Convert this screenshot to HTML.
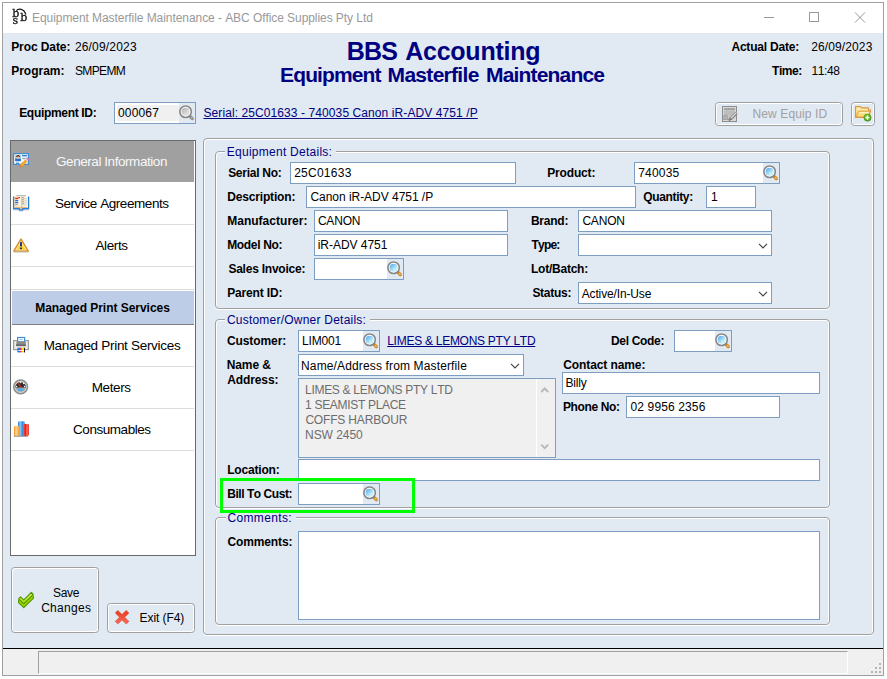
<!DOCTYPE html>
<html><head><meta charset="utf-8"><title>Equipment Masterfile Maintenance</title>
<style>
*{box-sizing:border-box;margin:0;padding:0}
html,body{width:887px;height:679px;overflow:hidden;background:#fff}
body{font-family:"Liberation Sans",sans-serif;font-size:12px;color:#000;position:relative;font-kerning:none}
.a{position:absolute;white-space:nowrap;line-height:14px}
.b{font-weight:bold}
.in{position:absolute;background:#fff;border:1px solid #7d9ec0}
.fs{position:absolute;border:1px solid #a0a0a0;border-radius:4px;box-shadow:inset 1px 1px 0 #fff,inset -1px 0 0 #fff,0 1px 0 #fff}
.lg{background:#e1e9f3}
.lnk{color:#000080;text-decoration:underline;text-underline-offset:1px}
.mi{position:absolute;left:11px;width:183px;height:42px;border-bottom:1px solid #dcdcdc}
.btn{position:absolute;border:1px solid #a0a0a0;border-radius:3.5px;box-shadow:inset 1px 1px 0 #fff,inset -1px -1px 0 #fff}
svg{position:absolute;overflow:visible}
.ic{position:absolute;overflow:visible;display:block}
</style></head><body>
<div class="a" style="left:2px;top:2px;width:882px;height:674px;border:1px solid #a0a0a0;background:#e1e9f3"></div>
<div class="a" style="left:3px;top:3px;width:880px;height:30px;background:#fff"></div>
<div class="a" style="left:32.02px;top:10px;line-height:16px;letter-spacing:-0.066px;color:#999;">Equipment Masterfile Maintenance - ABC Office Supplies Pty Ltd</div>
<div class="a b" style="left:11.20px;top:40px;letter-spacing:-0.085px;">Proc Date:</div>
<div class="a" style="left:74.90px;top:40px;letter-spacing:0.180px;">26/09/2023</div>
<div class="a b" style="left:11.20px;top:64px;letter-spacing:-0.012px;">Program:</div>
<div class="a" style="left:74.96px;top:64px;letter-spacing:-0.634px;">SMPEMM</div>
<div class="a b" style="left:346.63px;top:37.4px;font-size:25px;line-height:28px;letter-spacing:-0.717px;color:#000080;">BBS</div>
<div class="a b" style="left:405.18px;top:37.4px;font-size:25px;line-height:28px;letter-spacing:-0.233px;color:#000080;">Accounting</div>
<div class="a b" style="left:280.10px;top:62.95px;font-size:21px;line-height:24px;letter-spacing:-0.900px;color:#000080;">Equipment</div>
<div class="a b" style="left:387.60px;top:62.95px;font-size:21px;line-height:24px;letter-spacing:-0.702px;color:#000080;">Masterfile</div>
<div class="a b" style="left:486.00px;top:62.95px;font-size:21px;line-height:24px;letter-spacing:-0.818px;color:#000080;">Maintenance</div>
<div class="a b" style="left:731.45px;top:40px;letter-spacing:-0.206px;">Actual Date:</div>
<div class="a" style="left:811.15px;top:40px;letter-spacing:0.125px;">26/09/2023</div>
<div class="a b" style="left:772.12px;top:64px;letter-spacing:-0.479px;">Time:</div>
<div class="a" style="left:811.59px;top:64px;letter-spacing:-0.448px;">11:48</div>
<div class="a b" style="left:19.20px;top:106px;letter-spacing:-0.318px;">Equipment ID:</div>
<div class="in" style="left:114px;top:102px;width:82px;height:22px;background:#f0f0f0;box-shadow:inset 0 0 0 2px #fff"></div>
<div class="a" style="left:118.03px;top:106px;letter-spacing:0.166px;">000067</div>
<div class="a lnk" style="left:203.46px;top:106px;letter-spacing:0.090px;">Serial: 25C01633 - 740035 Canon iR-ADV 4751 /P</div>
<div class="btn" style="left:715px;top:102px;width:128px;height:24px;"></div>
<div class="a" style="left:752.52px;top:107px;letter-spacing:0.113px;color:#a0a0a0;">New Equip ID</div>
<div class="btn" style="left:851px;top:102px;width:24px;height:24px;"></div>
<div class="a" style="left:10px;top:140px;width:186px;height:416px;background:#fff;border:1px solid #696969"></div>
<div class="mi" style="left:11px;top:141px;width:183px;height:41px;background:#a0a0a0;border:0"></div>
<div class="mi" style="left:11px;top:183px;width:183px;height:42px;"></div>
<div class="mi" style="left:11px;top:225px;width:183px;height:42px;"></div>
<div class="mi" style="left:11px;top:267px;width:183px;height:23px;"></div>
<div class="a" style="left:12px;top:291px;width:182px;height:34px;background:#bdcde7;border-bottom:1px solid #808080"></div>
<div class="mi" style="left:11px;top:325px;width:183px;height:42px;"></div>
<div class="mi" style="left:11px;top:367px;width:183px;height:42px;"></div>
<div class="mi" style="left:11px;top:409px;width:183px;height:42px;"></div>
<div class="a" style="left:56.07px;top:154px;font-size:13.5px;line-height:16px;letter-spacing:-0.442px;color:#f8f8f8;">General Information</div>
<div class="a" style="left:54.89px;top:196px;font-size:13.5px;line-height:16px;letter-spacing:-0.435px;">Service Agreements</div>
<div class="a" style="left:95.47px;top:238px;font-size:13.5px;line-height:16px;letter-spacing:-0.389px;">Alerts</div>
<div class="a b" style="left:35.20px;top:301px;letter-spacing:-0.033px;">Managed Print Services</div>
<div class="a" style="left:43.64px;top:338px;font-size:13.5px;line-height:16px;letter-spacing:-0.299px;">Managed Print Services</div>
<div class="a" style="left:91.64px;top:380px;font-size:13.5px;line-height:16px;letter-spacing:-0.373px;">Meters</div>
<div class="a" style="left:73.06px;top:422px;font-size:13.5px;line-height:16px;letter-spacing:-0.457px;">Consumables</div>
<div class="btn" style="left:11px;top:567px;width:88px;height:66px;"></div>
<div class="a" style="left:52.96px;top:586px;letter-spacing:-0.324px;">Save</div>
<div class="a" style="left:41.14px;top:601px;letter-spacing:0.301px;">Changes</div>
<div class="btn" style="left:107px;top:603px;width:88px;height:30px;"></div>
<div class="a" style="left:139.52px;top:611px;letter-spacing:-0.069px;">Exit (F4)</div>
<div class="fs" style="left:203px;top:138px;width:671px;height:497px;"></div>
<div class="fs" style="left:215px;top:151px;width:615px;height:158px;"></div>
<div class="fs" style="left:215px;top:319px;width:615px;height:189px;"></div>
<div class="fs" style="left:215px;top:517px;width:615px;height:108px;"></div>
<div class="a" style="left:225.3px;top:149px;width:110.69999999999999px;height:4px;background:#e1e9f3"></div>
<div class="a" style="left:226.82px;top:145px;letter-spacing:0.257px;color:#000080;">Equipment Details:</div>
<div class="a" style="left:225px;top:317px;width:145.0px;height:4px;background:#e1e9f3"></div>
<div class="a" style="left:226.89px;top:313px;letter-spacing:0.226px;color:#000080;">Customer/Owner Details:</div>
<div class="a" style="left:225.5px;top:515px;width:70.25px;height:4px;background:#e1e9f3"></div>
<div class="a" style="left:227.39px;top:511px;letter-spacing:0.363px;color:#000080;">Comments:</div>
<div class="a b" style="left:228.15px;top:166px;letter-spacing:-0.274px;">Serial No:</div>
<div class="in" style="left:290px;top:162px;width:226px;height:22px;"></div>
<div class="a" style="left:294.15px;top:166px;letter-spacing:0.257px;">25C01633</div>
<div class="a b" style="left:547.20px;top:166px;letter-spacing:-0.153px;">Product:</div>
<div class="in" style="left:634px;top:162px;width:146px;height:22px;"></div>
<div class="a" style="left:638.13px;top:166px;letter-spacing:0.225px;">740035</div>
<div class="a b" style="left:227.20px;top:190px;letter-spacing:-0.159px;">Description:</div>
<div class="in" style="left:306px;top:186px;width:330px;height:22px;"></div>
<div class="a" style="left:310.39px;top:190px;letter-spacing:-0.032px;">Canon iR-ADV 4751 /P</div>
<div class="a b" style="left:643.26px;top:190px;letter-spacing:-0.340px;">Quantity:</div>
<div class="in" style="left:706px;top:186px;width:50px;height:22px;"></div>
<div class="a" style="left:711.09px;top:190px;">1</div>
<div class="a b" style="left:227.20px;top:214px;letter-spacing:0.021px;">Manufacturer:</div>
<div class="in" style="left:314px;top:210px;width:194px;height:22px;"></div>
<div class="a" style="left:317.89px;top:214px;letter-spacing:-0.175px;">CANON</div>
<div class="a b" style="left:530.95px;top:214px;letter-spacing:-0.232px;">Brand:</div>
<div class="in" style="left:578px;top:210px;width:194px;height:22px;"></div>
<div class="a" style="left:582.39px;top:214px;letter-spacing:-0.175px;">CANON</div>
<div class="a b" style="left:227.20px;top:238px;letter-spacing:-0.342px;">Model No:</div>
<div class="in" style="left:314px;top:234px;width:194px;height:22px;"></div>
<div class="a" style="left:317.70px;top:238px;letter-spacing:-0.034px;">iR-ADV 4751</div>
<div class="a b" style="left:531.62px;top:238px;letter-spacing:-0.854px;">Type:</div>
<div class="in" style="left:578px;top:234px;width:194px;height:22px;"></div>
<div class="a b" style="left:228.40px;top:262px;letter-spacing:-0.230px;">Sales Invoice:</div>
<div class="in" style="left:314px;top:258px;width:90px;height:22px;"></div>
<div class="a b" style="left:530.95px;top:262px;letter-spacing:-0.230px;">Lot/Batch:</div>
<div class="a b" style="left:227.20px;top:286px;letter-spacing:-0.158px;">Parent ID:</div>
<div class="a b" style="left:532.40px;top:286px;letter-spacing:-0.270px;">Status:</div>
<div class="in" style="left:578px;top:282px;width:194px;height:22px;"></div>
<div class="a" style="left:581.73px;top:287px;letter-spacing:-0.146px;">Active/In-Use</div>
<div class="a b" style="left:227.01px;top:334px;letter-spacing:-0.101px;">Customer:</div>
<div class="in" style="left:298px;top:330px;width:82px;height:22px;"></div>
<div class="a" style="left:302.12px;top:334px;letter-spacing:-0.171px;">LIM001</div>
<div class="a lnk" style="left:387.22px;top:334px;letter-spacing:-0.270px;">LIMES &amp; LEMONS PTY LTD</div>
<div class="a b" style="left:610.95px;top:334px;letter-spacing:-0.312px;">Del Code:</div>
<div class="in" style="left:674px;top:330px;width:58px;height:22px;"></div>
<div class="a b" style="left:226.70px;top:358px;letter-spacing:-0.091px;">Name &amp;</div>
<div class="a b" style="left:227.20px;top:373px;letter-spacing:-0.109px;">Address:</div>
<div class="in" style="left:298px;top:354px;width:226px;height:22px;"></div>
<div class="a" style="left:301.02px;top:359px;letter-spacing:0.140px;">Name/Address from Masterfile</div>
<div class="a b" style="left:563.26px;top:358px;letter-spacing:-0.096px;">Contact name:</div>
<div class="in" style="left:298px;top:378px;width:258px;height:80px;background:#f0f0f0"></div>
<div class="a" style="left:305.02px;top:383px;letter-spacing:-0.294px;color:#6d6d6d;">LIMES &amp; LEMONS PTY LTD</div>
<div class="a" style="left:305.09px;top:398px;letter-spacing:-0.314px;color:#6d6d6d;">1 SEAMIST PLACE</div>
<div class="a" style="left:305.39px;top:413px;letter-spacing:-0.170px;color:#6d6d6d;">COFFS HARBOUR</div>
<div class="a" style="left:305.02px;top:428px;letter-spacing:-0.039px;color:#6d6d6d;">NSW 2450</div>
<div class="in" style="left:562px;top:372px;width:258px;height:22px;"></div>
<div class="a" style="left:565.52px;top:376px;letter-spacing:-0.174px;">Billy</div>
<div class="a b" style="left:562.95px;top:400px;letter-spacing:-0.373px;">Phone No:</div>
<div class="in" style="left:626px;top:396px;width:154px;height:22px;"></div>
<div class="a" style="left:630.53px;top:400px;letter-spacing:0.126px;">02 9956 2356</div>
<div class="a b" style="left:227.20px;top:463px;letter-spacing:-0.186px;">Location:</div>
<div class="in" style="left:298px;top:459px;width:522px;height:22px;"></div>
<div class="a b" style="left:227.20px;top:487px;letter-spacing:-0.450px;">Bill To Cust:</div>
<div class="in" style="left:298px;top:483px;width:82px;height:22px;"></div>
<div class="a" style="left:220px;top:478px;width:195px;height:35px;border:3px solid #00ff00"></div>
<div class="a b" style="left:227.51px;top:535px;letter-spacing:-0.132px;">Comments:</div>
<div class="in" style="left:298px;top:531px;width:522px;height:89px;"></div>
<div class="a" style="left:3px;top:648px;width:880px;height:1px;background:#000"></div>
<div class="a" style="left:3px;top:649px;width:880px;height:26px;background:#f0f0f0"></div>
<div class="a" style="left:38px;top:651px;width:810px;height:23px;border-left:1px solid #a0a0a0;border-top:1px solid #a0a0a0;border-right:1px solid #fff;border-bottom:1px solid #fff"></div>
<svg class="ic" style="left:179px;top:103px" width="16" height="20" viewBox="0 0 16 20"><defs><linearGradient id="lg1" x1="0.15" y1="0.1" x2="0.85" y2="0.9"><stop offset="0" stop-color="#b8b8b8"/><stop offset="0.75" stop-color="#dedede"/></linearGradient></defs><rect width="16" height="20" fill="#e1e9f3"/><path d="M11.3 13.6 L13.3 15.6" stroke="#8c8c8c" stroke-width="3.2" stroke-linecap="round"/><path d="M12.1 14.3 L13.3 15.5" stroke="#b4b4b4" stroke-width="1.1" stroke-linecap="round"/><circle cx="6.6" cy="8.75" r="5.75" fill="#ffffff" stroke="#868686" stroke-width="1.6"/><circle cx="6.6" cy="8.75" r="4.05" fill="url(#lg1)"/></svg>
<svg class="ic" style="left:763px;top:163px" width="16" height="20" viewBox="0 0 16 20"><defs><linearGradient id="lg2" x1="0.15" y1="0.1" x2="0.85" y2="0.9"><stop offset="0" stop-color="#5cb0f0"/><stop offset="0.75" stop-color="#c6eefb"/></linearGradient></defs><rect width="16" height="20" fill="#e1e9f3"/><path d="M11.3 13.6 L13.3 15.6" stroke="#c8861e" stroke-width="3.2" stroke-linecap="round"/><path d="M12.1 14.3 L13.3 15.5" stroke="#f5c36a" stroke-width="1.1" stroke-linecap="round"/><circle cx="6.6" cy="8.75" r="5.75" fill="#ffffff" stroke="#868686" stroke-width="1.6"/><circle cx="6.6" cy="8.75" r="4.05" fill="url(#lg2)"/></svg>
<svg class="ic" style="left:387px;top:259px" width="16" height="20" viewBox="0 0 16 20"><defs><linearGradient id="lg3" x1="0.15" y1="0.1" x2="0.85" y2="0.9"><stop offset="0" stop-color="#5cb0f0"/><stop offset="0.75" stop-color="#c6eefb"/></linearGradient></defs><rect width="16" height="20" fill="#e1e9f3"/><path d="M11.3 13.6 L13.3 15.6" stroke="#c8861e" stroke-width="3.2" stroke-linecap="round"/><path d="M12.1 14.3 L13.3 15.5" stroke="#f5c36a" stroke-width="1.1" stroke-linecap="round"/><circle cx="6.6" cy="8.75" r="5.75" fill="#ffffff" stroke="#868686" stroke-width="1.6"/><circle cx="6.6" cy="8.75" r="4.05" fill="url(#lg3)"/></svg>
<svg class="ic" style="left:363px;top:331px" width="16" height="20" viewBox="0 0 16 20"><defs><linearGradient id="lg4" x1="0.15" y1="0.1" x2="0.85" y2="0.9"><stop offset="0" stop-color="#5cb0f0"/><stop offset="0.75" stop-color="#c6eefb"/></linearGradient></defs><rect width="16" height="20" fill="#e1e9f3"/><path d="M11.3 13.6 L13.3 15.6" stroke="#c8861e" stroke-width="3.2" stroke-linecap="round"/><path d="M12.1 14.3 L13.3 15.5" stroke="#f5c36a" stroke-width="1.1" stroke-linecap="round"/><circle cx="6.6" cy="8.75" r="5.75" fill="#ffffff" stroke="#868686" stroke-width="1.6"/><circle cx="6.6" cy="8.75" r="4.05" fill="url(#lg4)"/></svg>
<svg class="ic" style="left:715px;top:331px" width="16" height="20" viewBox="0 0 16 20"><defs><linearGradient id="lg5" x1="0.15" y1="0.1" x2="0.85" y2="0.9"><stop offset="0" stop-color="#5cb0f0"/><stop offset="0.75" stop-color="#c6eefb"/></linearGradient></defs><rect width="16" height="20" fill="#e1e9f3"/><path d="M11.3 13.6 L13.3 15.6" stroke="#c8861e" stroke-width="3.2" stroke-linecap="round"/><path d="M12.1 14.3 L13.3 15.5" stroke="#f5c36a" stroke-width="1.1" stroke-linecap="round"/><circle cx="6.6" cy="8.75" r="5.75" fill="#ffffff" stroke="#868686" stroke-width="1.6"/><circle cx="6.6" cy="8.75" r="4.05" fill="url(#lg5)"/></svg>
<svg class="ic" style="left:363px;top:484px" width="16" height="20" viewBox="0 0 16 20"><defs><linearGradient id="lg6" x1="0.15" y1="0.1" x2="0.85" y2="0.9"><stop offset="0" stop-color="#5cb0f0"/><stop offset="0.75" stop-color="#c6eefb"/></linearGradient></defs><rect width="16" height="20" fill="#e1e9f3"/><path d="M11.3 13.6 L13.3 15.6" stroke="#c8861e" stroke-width="3.2" stroke-linecap="round"/><path d="M12.1 14.3 L13.3 15.5" stroke="#f5c36a" stroke-width="1.1" stroke-linecap="round"/><circle cx="6.6" cy="8.75" r="5.75" fill="#ffffff" stroke="#868686" stroke-width="1.6"/><circle cx="6.6" cy="8.75" r="4.05" fill="url(#lg6)"/></svg>
<svg class="ic" style="left:758px;top:242.6px" width="10" height="6" viewBox="0 0 10 6"><path d="M1 0.9 L5 4.9 L9 0.9" fill="none" stroke="#444" stroke-width="1.15"/></svg>
<svg class="ic" style="left:758px;top:290.6px" width="10" height="6" viewBox="0 0 10 6"><path d="M1 0.9 L5 4.9 L9 0.9" fill="none" stroke="#444" stroke-width="1.15"/></svg>
<svg class="ic" style="left:510px;top:362.8px" width="10" height="6" viewBox="0 0 10 6"><path d="M1 0.9 L5 4.9 L9 0.9" fill="none" stroke="#444" stroke-width="1.15"/></svg>
<div class="a" style="left:536px;top:379px;width:1px;height:78px;background:#fff"></div>
<svg class="ic" style="left:540px;top:386px" width="10" height="8" viewBox="0 0 10 8"><path d="M1.2 6 L4.7 2.5 L8.2 6" fill="none" stroke="#b9b9b9" stroke-width="2"/></svg>
<svg class="ic" style="left:540px;top:443px" width="10" height="8" viewBox="0 0 10 8"><path d="M1.2 1.6 L4.7 5.1 L8.2 1.6" fill="none" stroke="#b9b9b9" stroke-width="2"/></svg>
<svg class="ic" style="left:760px;top:8px" width="112" height="20" viewBox="0 0 112 20"><g fill="none" stroke="#999" stroke-width="1"><path d="M4 9.5 H14"/><rect x="49.5" y="4.5" width="9" height="9"/><path d="M95 4.5 L105 14.5 M105 4.5 L95 14.5"/></g></svg>
<svg class="ic" style="left:869px;top:661px" width="12" height="12" viewBox="0 0 12 12"><g fill="#b4b4b4"><rect x="10" y="2" width="2" height="2"/><rect x="6" y="6" width="2" height="2"/><rect x="10" y="6" width="2" height="2"/><rect x="2" y="10" width="2" height="2"/><rect x="6" y="10" width="2" height="2"/><rect x="10" y="10" width="2" height="2"/></g></svg>
<svg class="ic" style="left:11px;top:8px;filter:grayscale(1)" width="17" height="17" viewBox="0 0 17 17"><g font-family="DejaVu Serif,Liberation Serif,serif" fill="#111" stroke="#111" stroke-width=".3"><text x="1.3" y="8.8" font-size="11">b</text><text x="1.5" y="15.9" font-size="11">s</text><text x="9.2" y="12.9" font-size="11">b</text></g><path d="M5.4 2.7 C7.4 0.4 12.8 0.3 14.9 6.5" fill="none" stroke="#111" stroke-width="1.2"/></svg>
<svg class="ic" style="left:722px;top:106px" width="16" height="16" viewBox="0 0 16 16"><rect x="0.5" y="0.5" width="14" height="15" fill="#c6c6c6" stroke="#8e8e8e"/><rect x="1.5" y="1.5" width="12" height="13" fill="none" stroke="#dcdcdc" stroke-width=".8"/><rect x="2.2" y="2.2" width="10.6" height="1.8" fill="#a0a0a0"/><rect x="2.2" y="5" width="10.6" height="4" fill="#bcbcbc"/><rect x="1.8" y="9.6" width="3.4" height="4" fill="#b4b4b4" stroke="#9a9a9a" stroke-width=".8"/><rect x="9.6" y="10" width="4" height="4.2" fill="#dadada"/><path d="M14.6 6.8 L8.4 13" stroke="#8a8a8a" stroke-width="3.2"/><path d="M14.4 6.6 L9 12" stroke="#dedede" stroke-width="1.1"/><path d="M8.6 12.8 L6.8 14.4" stroke="#787878" stroke-width="2"/></svg>
<svg class="ic" style="left:855px;top:105px" width="17" height="17" viewBox="0 0 17 17"><defs><linearGradient id="fo1" x1="0" y1="0" x2="0" y2="1"><stop offset="0" stop-color="#fff2b8"/><stop offset="1" stop-color="#f9cf5a"/></linearGradient><radialGradient id="fo2" cx=".4" cy=".35" r=".7"><stop offset="0" stop-color="#8fd23a"/><stop offset="1" stop-color="#3e9a12"/></radialGradient></defs><path d="M0.6 1.6 H5.4 L6.6 2.9 H13.4 V5 H15.6 L13.8 12.4 H0.6 Z" fill="url(#fo1)" stroke="#d9963c" stroke-width="1.1" stroke-linejoin="round"/><path d="M3.6 6.2 H15 L13.6 12 H1.4 Z" fill="#fbdc78" stroke="#dc9c44" stroke-width=".9"/><path d="M4 7.6 H13.6" stroke="#fff6d0" stroke-width="1.2"/><circle cx="12.5" cy="12.6" r="3.6" fill="url(#fo2)" stroke="#3f8f14" stroke-width=".6"/><path d="M12.5 10.5 V14.7 M10.4 12.6 H14.6" stroke="#fff" stroke-width="1.4"/></svg>
<svg class="ic" style="left:13px;top:152px" width="17" height="17" viewBox="0 0 17 17"><defs><linearGradient id="gi1" x1="0" y1="0" x2="1" y2="1"><stop offset="0" stop-color="#ffc544"/><stop offset="1" stop-color="#f08a12"/></linearGradient></defs><path d="M0.6 1.6 H15.4 V12.4 H11 V11 H9 V12.4 H5.5 V11 H3.5 V12.4 H0.6 Z" fill="#fff" stroke="#3d8ccc" stroke-width="1.2" stroke-linejoin="round"/><rect x="2" y="3" width="6" height="6.2" fill="#8fd0f6"/><rect x="2.2" y="6.6" width="5.6" height="2.6" fill="#2c6fd0"/><circle cx="5" cy="5.2" r="1.5" fill="#f2c088"/><path d="M3.2 4.6 Q5 1.6 6.9 4.6 Q5 3.6 3.2 4.6Z" fill="#7a3a0c" stroke="#7a3a0c" stroke-width=".8"/><rect x="9" y="3" width="5" height="1.4" fill="#3a78c8"/><rect x="9" y="5" width="5" height="2" fill="#d8f2fb"/><rect x="9.4" y="6.2" width="3" height="1" fill="#8a8a8a"/><path d="M13.4 8.2 L8.2 13.8" stroke="url(#gi1)" stroke-width="3"/><path d="M15.2 6.3 L14.2 7.4" stroke="#ee6ac0" stroke-width="3"/><path d="M14.2 7.4 L13.2 8.5" stroke="#d0d0d0" stroke-width="3"/><path d="M8.4 13.6 L6.8 15.3" stroke="#c98a50" stroke-width="2.4"/></svg>
<svg class="ic" style="left:13px;top:194px" width="17" height="18" viewBox="0 0 17 18"><defs><linearGradient id="bk1" x1="0" y1="0" x2="1" y2="0"><stop offset="0" stop-color="#f3d7a8"/><stop offset=".45" stop-color="#fffaf0"/><stop offset=".5" stop-color="#d9b98a"/><stop offset=".6" stop-color="#f6e3c0"/><stop offset="1" stop-color="#fffdf8"/></linearGradient></defs><rect x="3.2" y="1.1" width="9.8" height="1.2" fill="#b4b4b4"/><path d="M0.7 2.6 V14.7 H6.4 V16 H9.8 V14.7 H15.5 V2.6" fill="none" stroke="#2b7fd0" stroke-width="1.5" stroke-linejoin="round"/><path d="M0.4 15.9 H5.6 M10.6 15.9 H15.8 M6.2 17 H10" stroke="#9ab0c8" stroke-width=".7"/><rect x="1.5" y="2.2" width="13.2" height="11.6" fill="url(#bk1)"/><path d="M1.5 13.5 H14.7" stroke="#e8b878" stroke-width="1"/><rect x="7.4" y="13.6" width="1.6" height="1.4" fill="#f0a860"/><rect x="2.2" y="3.8" width="3" height="1.3" fill="#ee2a10"/><rect x="5.2" y="3" width="1.8" height="1.2" fill="#ee2a10"/><rect x="2.2" y="6" width="3" height="1.2" fill="#1c6fe0"/><rect x="2.2" y="8" width="3" height="1.2" fill="#1c6fe0"/><rect x="2.4" y="10.1" width="2.6" height="1" fill="#a8a8a8"/><g fill="#a0a0a0"><rect x="9.2" y="3.2" width="1.8" height="1"/><rect x="9.2" y="5.2" width="1.8" height="1"/><rect x="9.2" y="7.2" width="1.8" height="1"/><rect x="9.2" y="9.2" width="1.8" height="1"/></g><g fill="#d0d0d0"><rect x="11.4" y="4.2" width="2.6" height="1"/><rect x="11.4" y="6.2" width="2.6" height="1"/><rect x="11.4" y="8.2" width="2.6" height="1"/><rect x="11.4" y="10.2" width="2.6" height="1"/></g></svg>
<svg class="ic" style="left:13px;top:237px" width="17" height="16" viewBox="0 0 17 16"><defs><linearGradient id="al1" x1="0" y1="0" x2="0" y2="1"><stop offset="0" stop-color="#fff0a0"/><stop offset=".5" stop-color="#ffd84a"/><stop offset="1" stop-color="#ffc41c"/></linearGradient></defs><path d="M8 2.1 L15.2 14.1 H0.8 Z" fill="url(#al1)" stroke="#d58a2c" stroke-width="1.5" stroke-linejoin="round"/><path d="M8 4.3 L13.4 13 H2.6 Z" fill="none" stroke="#fff4c0" stroke-width=".7"/><rect x="7.05" y="5.1" width="1.9" height="4.2" fill="#1c2f80"/><rect x="7.05" y="10.5" width="1.9" height="1.7" fill="#1c2f80"/><path d="M0.4 15.1 H15.6" stroke="#b0b0b0" stroke-width=".7"/></svg>
<svg class="ic" style="left:13px;top:336px" width="17" height="18" viewBox="0 0 17 18"><defs><linearGradient id="pr1" x1="0" y1="0" x2="1" y2="0"><stop offset="0" stop-color="#0a74e8"/><stop offset=".2" stop-color="#0a8cf0"/><stop offset=".28" stop-color="#e8189a"/><stop offset=".48" stop-color="#f02a2a"/><stop offset=".6" stop-color="#ffd800"/><stop offset=".84" stop-color="#e8e000"/><stop offset=".9" stop-color="#111"/><stop offset="1" stop-color="#111"/></linearGradient></defs><rect x="0.6" y="4.6" width="14.8" height="9" fill="#ececec" stroke="#9c9c9c" stroke-width="1.2"/><rect x="4.6" y="1.5" width="7" height="4.4" fill="#fff" stroke="#3f8fd8" stroke-width="1.2"/><rect x="6.2" y="3" width="3.6" height=".9" fill="#9cccf4"/><rect x="3.4" y="5.4" width="9.4" height="3.2" fill="#8c8c8c"/><rect x="3" y="8.2" width="10" height="1.8" fill="#6a6a6a"/><rect x="3.6" y="10" width="9" height="1.4" fill="#d4d4d4"/><rect x="4.4" y="11.8" width="7.6" height="4.6" fill="url(#pr1)"/><rect x="5.4" y="14" width="5.6" height=".9" fill="#fff"/></svg>
<svg class="ic" style="left:12px;top:378px" width="18" height="18" viewBox="0 0 18 18"><circle cx="8.6" cy="8.8" r="6.9" fill="#bcbcbc" stroke="#8e8e8e" stroke-width="1.5"/><circle cx="8.6" cy="8.8" r="5.5" fill="#a2a2a2" stroke="#dadada" stroke-width=".9"/><path d="M3.2 9.6 A5.4 5.4 0 0 1 14 9.6 Z" fill="#2c3034"/><g fill="#fff"><circle cx="4.5" cy="8.6" r=".75"/><circle cx="8.5" cy="4.5" r=".75"/><circle cx="11.6" cy="5.6" r=".75"/><circle cx="12.6" cy="8.5" r=".75"/></g><path d="M5.2 5 L6 4.6 L9.3 8.2 L8.2 9.2 Z" fill="#ee2a0a"/><rect x="6" y="10.8" width="5" height="2" fill="#42b0f8"/></svg>
<svg class="ic" style="left:13px;top:420px" width="17" height="18" viewBox="0 0 17 18"><defs><linearGradient id="c1" x1="0" y1="0" x2="1" y2="0"><stop offset="0" stop-color="#f08000"/><stop offset=".35" stop-color="#ffd898"/><stop offset="1" stop-color="#f4a43c"/></linearGradient><linearGradient id="c2" x1="0" y1="0" x2="1" y2="0"><stop offset="0" stop-color="#1c74c8"/><stop offset=".3" stop-color="#9cd0fa"/><stop offset=".6" stop-color="#3a8ad8"/><stop offset="1" stop-color="#6cc0ff"/></linearGradient><linearGradient id="c3" x1="0" y1="0" x2="1" y2="0"><stop offset="0" stop-color="#ff5a4a"/><stop offset=".4" stop-color="#ee1c10"/><stop offset=".7" stop-color="#ff7a6a"/><stop offset="1" stop-color="#d40000"/></linearGradient></defs><path d="M5 2.6 Q5 1.2 6.4 1.2 H10.6 Q12 1.2 12 2.6 V16 H5 Z" fill="url(#c2)"/><path d="M1.1 7.3 Q1.1 6.1 2.3 6.1 H5 Q6.2 6.1 6.2 7.3 V16 H1.1 Z" fill="url(#c1)"/><path d="M10.2 5.2 Q10.2 4 11.4 4 H14.6 Q15.8 4 15.8 5.2 V15 L14.8 16 H10.2 Z" fill="url(#c3)"/><path d="M1 16.3 H15" stroke="#8a8a8a" stroke-width=".9"/></svg>
<svg class="ic" style="left:18px;top:591px" width="17" height="18" viewBox="0 0 17 18"><defs><linearGradient id="sv1" x1="0" y1="0" x2="0" y2="1"><stop offset="0" stop-color="#e4f26a"/><stop offset="1" stop-color="#a4d808"/></linearGradient></defs><g transform="translate(-0.7 -0.6) scale(1.08)"><path d="M3 7.6 L6 10.4 L13 3.4 L14.8 5.2 V7.4 L6 16 L1.2 11.4 V9.2 Z" fill="#9cd400" stroke="#4a9800" stroke-width="1" stroke-linejoin="round"/><path d="M3 6 L6 8.8 L13 1.8 L14.8 3.6 L6 12.4 L1.2 7.8 Z" fill="url(#sv1)" stroke="#4a9800" stroke-width="1" stroke-linejoin="round"/></g></svg>
<svg class="ic" style="left:115px;top:610px" width="15" height="15" viewBox="0 0 15 15"><defs><linearGradient id="ex1" x1="0" y1="0" x2="0" y2="1"><stop offset="0" stop-color="#e8381c"/><stop offset="1" stop-color="#f5705c"/></linearGradient></defs><path d="M2.8 0.6 L7 4.6 L11.2 0.6 L13.8 3 L9.6 7.2 L13.8 11.4 L11.2 13.8 L7 9.8 L2.8 13.8 L0.4 11.4 L4.6 7.2 L0.4 3 Z" fill="url(#ex1)" stroke="#e2462c" stroke-width=".8" stroke-linejoin="round"/></svg>
</body></html>
